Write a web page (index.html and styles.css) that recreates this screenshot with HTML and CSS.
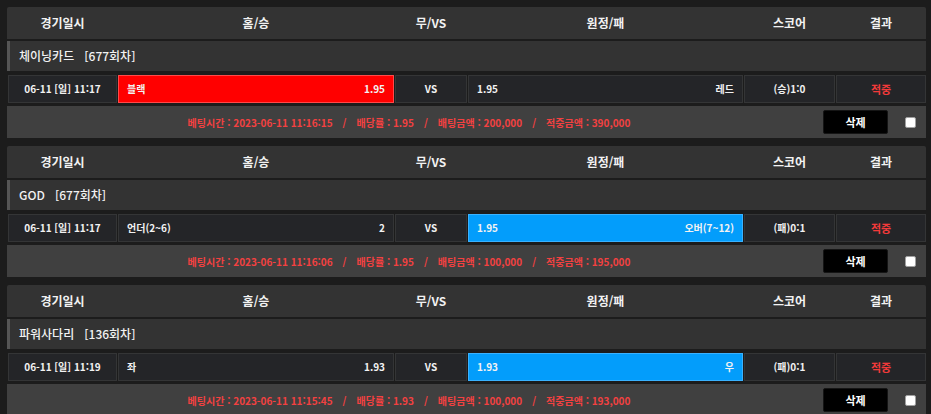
FILE: index.html
```html
<!DOCTYPE html>
<html lang="ko">
<head>
<meta charset="utf-8">
<title>배팅내역</title>
<link rel="stylesheet" href="styles.css">
</head>
<body>
<main class="list">

  <section class="bet">
    <div class="head">
      <div>경기일시</div><div>홈/승</div><div>무/VS</div><div>원정/패</div><div>스코어</div><div>결과</div>
    </div>
    <div class="title">체이닝카드&nbsp;&nbsp;&nbsp;[677회차]</div>
    <div class="row">
      <div class="cell">06-11 [일] 11:17</div>
      <div class="cell side pick-red"><span>블랙</span><span>1.95</span></div>
      <div class="cell">VS</div>
      <div class="cell side"><span>1.95</span><span>레드</span></div>
      <div class="cell">(승)1:0</div>
      <div class="cell win">적중</div>
    </div>
    <div class="info">
      <p class="info-text"><span>베팅시간 : 2023-06-11 11:16:15</span><span class="sep">/</span><span>배당률 : 1.95</span><span class="sep">/</span><span>배팅금액 : 200,000</span><span class="sep">/</span><span>적중금액 : 390,000</span></p>
      <button class="del">삭제</button>
      <span class="chk"></span>
    </div>
  </section>

  <section class="bet">
    <div class="head">
      <div>경기일시</div><div>홈/승</div><div>무/VS</div><div>원정/패</div><div>스코어</div><div>결과</div>
    </div>
    <div class="title">GOD&nbsp;&nbsp;&nbsp;[677회차]</div>
    <div class="row">
      <div class="cell">06-11 [일] 11:17</div>
      <div class="cell side"><span>언더(2~6)</span><span>2</span></div>
      <div class="cell">VS</div>
      <div class="cell side pick-blue"><span>1.95</span><span>오버(7~12)</span></div>
      <div class="cell">(패)0:1</div>
      <div class="cell win">적중</div>
    </div>
    <div class="info">
      <p class="info-text"><span>베팅시간 : 2023-06-11 11:16:06</span><span class="sep">/</span><span>배당률 : 1.95</span><span class="sep">/</span><span>배팅금액 : 100,000</span><span class="sep">/</span><span>적중금액 : 195,000</span></p>
      <button class="del">삭제</button>
      <span class="chk"></span>
    </div>
  </section>

  <section class="bet">
    <div class="head">
      <div>경기일시</div><div>홈/승</div><div>무/VS</div><div>원정/패</div><div>스코어</div><div>결과</div>
    </div>
    <div class="title">파워사다리&nbsp;&nbsp;&nbsp;[136회차]</div>
    <div class="row">
      <div class="cell">06-11 [일] 11:19</div>
      <div class="cell side"><span>좌</span><span>1.93</span></div>
      <div class="cell">VS</div>
      <div class="cell side pick-blue"><span>1.93</span><span>우</span></div>
      <div class="cell">(패)0:1</div>
      <div class="cell win">적중</div>
    </div>
    <div class="info">
      <p class="info-text"><span>베팅시간 : 2023-06-11 11:15:45</span><span class="sep">/</span><span>배당률 : 1.93</span><span class="sep">/</span><span>배팅금액 : 100,000</span><span class="sep">/</span><span>적중금액 : 193,000</span></p>
      <button class="del">삭제</button>
      <span class="chk"></span>
    </div>
  </section>

</main>
</body>
</html>
```

FILE: styles.css
```css
html, body {
  margin: 0;
  background: #1c1c1c;
}
body {
  padding: 7px 5px 0 7px;
  font-family: "Noto Sans CJK KR", "Noto Sans", sans-serif;
  color: #f2f2f2;
}
.list {
  display: flex;
  flex-direction: column;
  gap: 8px;
}
.bet {
  display: flex;
  flex-direction: column;
}
.head {
  display: grid;
  grid-template-columns: 109px 276px 72px 275px 91px 1fr;
  column-gap: 1px;
  padding-left: 1px;
  height: 32px;
  background: #333333;
  border-radius: 2px 2px 0 0;
  font-size: 12px;
  font-weight: bold;
  line-height: 32px;
  text-align: center;
}
.title {
  margin-top: 2px;
  height: 30px;
  line-height: 30px;
  background: #333333;
  border-left: 3px solid #555555;
  padding-left: 9px;
  font-size: 12px;
  font-weight: 500;
}
.row {
  margin-top: 4px;
  display: grid;
  grid-template-columns: 109px 276px 72px 275px 91px 1fr;
  column-gap: 1px;
  padding-left: 1px;
  height: 28px;
}
.cell {
  box-sizing: border-box;
  background: #242528;
  border: 1px solid #343536;
  display: flex;
  align-items: center;
  justify-content: center;
  font-size: 10px;
  font-weight: bold;
  line-height: 1;
}
.cell.side {
  justify-content: space-between;
  padding: 0 8px;
}
.cell.pick-red {
  background: #ff0000;
  border-color: #ff4a4a;
}
.cell.pick-blue {
  background: #039dfb;
  border-color: #3ab2ff;
}
.cell.win {
  color: #f23a3a;
  font-size: 11px;
}
.info {
  margin-top: 3px;
  height: 32px;
  background: #404040;
  display: flex;
  align-items: center;
}
.info-text {
  margin: 0;
  width: 804px;
  text-align: center;
  color: #f34141;
  font-size: 10px;
  font-weight: bold;
  white-space: nowrap;
}
.sep {
  margin: 0 10px;
}
.del {
  margin-left: 12px;
  width: 65px;
  height: 24px;
  background: #000000;
  border: 1px solid #151515;
  border-radius: 2px;
  color: #ffffff;
  font-family: inherit;
  font-size: 11px;
  font-weight: bold;
  padding: 0;
  cursor: pointer;
}
.chk {
  margin-left: 17px;
  width: 9px;
  height: 9px;
  background: #ffffff;
  border: 1px solid #a0a0a0;
  border-radius: 2px;
}
```
